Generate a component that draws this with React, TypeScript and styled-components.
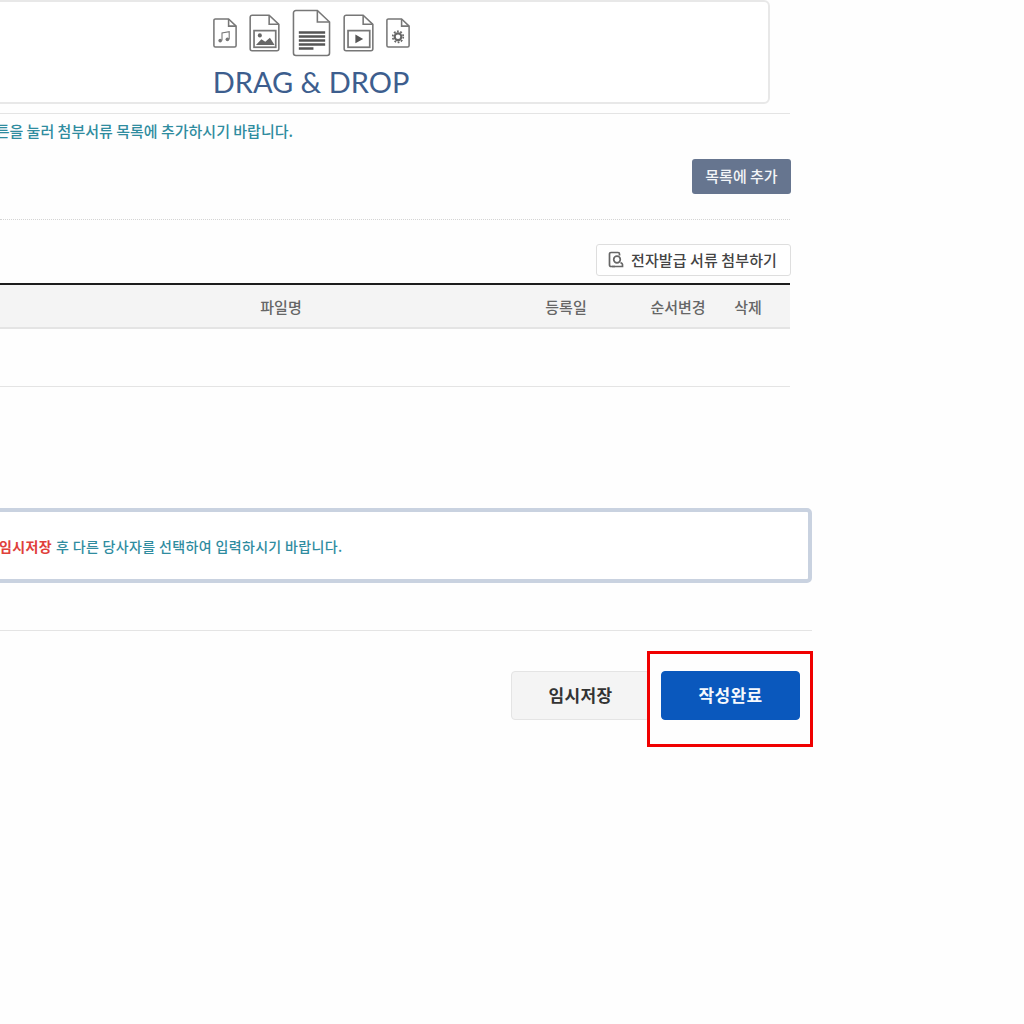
import React from 'react'
import styled, { createGlobalStyle } from 'styled-components'

const GlobalStyle = createGlobalStyle`
  html, body {
    margin: 0;
    padding: 0;
    background: #fefefe;
    overflow: hidden;
  }
  body {
    font-family: "Noto Sans CJK KR", "Noto Sans", sans-serif;
    color: #444;
  }
`;

const Page = styled.div`
  width: 812px;
  height: 1024px;
  display: flex;
  flex-direction: column;
`;

const Upload = styled.div`
  width: 790px;
  display: flex;
  flex-direction: column;
`;

const DropBox = styled.div`
  box-sizing: border-box;
  width: 918px;
  height: 104px;
  margin-left: -148px;
  border: 2px solid #e8e8e8;
  border-radius: 6px;
  background: #fff;
  display: flex;
  flex-direction: column;
  align-items: center;
`;

const IconRow = styled.div`
  height: 48px;
  margin-top: 7px;
  display: flex;
  align-items: center;
  gap: 12px;
`;

const DropLabel = styled.div`
  font-family: Lato, sans-serif;
  font-size: 29px;
  line-height: 36px;
  color: #3d5e8e;
  margin-top: 7px;
`;

const Rule = styled.div`
  height: 1px;
  background: #e4e4e4;
  margin-top: 9px;
`;

const Hint = styled.div`
  width: 293px;
  display: flex;
  justify-content: flex-end;
  margin-top: 8px;
  font-size: 15px;
  line-height: 18px;
  font-weight: 500;
  color: #2f8c9f;
  white-space: nowrap;
`;

const AddRow = styled.div`
  display: flex;
  justify-content: flex-end;
  margin: 19px -1px 0 0;
`;

const AddButton = styled.button`
  width: 99px;
  height: 35px;
  border: 0;
  border-radius: 3px;
  background: #66758f;
  color: #f3f5f8;
  font-family: inherit;
  font-size: 15px;
  font-weight: 500;
  padding: 0 0 2px;
  white-space: nowrap;
`;

const DottedRule = styled.div`
  margin-top: 25px;
  border-top: 1px dotted #d4d4d4;
`;

const IssueRow = styled.div`
  display: flex;
  justify-content: flex-end;
  margin: 24px -1px 0 0;
`;

const IssueButton = styled.button`
  box-sizing: border-box;
  width: 195px;
  height: 32px;
  border: 1px solid #dedede;
  border-radius: 3px;
  background: #fff;
  color: #444;
  font-family: inherit;
  font-size: 15px;
  font-weight: 500;
  letter-spacing: 0.1px;
  display: flex;
  align-items: center;
  gap: 7px;
  padding: 0 0 1px 11px;
  white-space: nowrap;
`;

const Table = styled.div`
  margin-top: 7px;
  border-top: 2px solid #1c1c1c;
`;

const HeadRow = styled.div`
  display: grid;
  grid-template-columns: 80px 402px 168px 56px 84px;
  height: 44px;
  box-sizing: border-box;
  align-items: center;
  background: #f4f4f4;
  border-bottom: 2px solid #e4e4e4;
`;

const HeadCell = styled.div`
  text-align: center;
  font-size: 15px;
  font-weight: 500;
  color: #666;
  white-space: nowrap;
`;

const EmptyRow = styled.div`
  height: 57px;
  border-bottom: 1px solid #e4e4e4;
`;

const Notice = styled.div`
  box-sizing: border-box;
  width: 830px;
  height: 75px;
  margin-left: -18px;
  margin-top: 121px;
  border: 4px solid #c9d2e0;
  border-radius: 5px;
  background: #fff;
  display: flex;
  align-items: center;
  font-size: 14px;
  font-weight: 500;
  letter-spacing: 0.35px;
  color: #2f8c9f;
  white-space: nowrap;
  padding: 0 0 0 13px;
`;

const Strong = styled.span`
  color: #e0403a;
  font-weight: 700;
  margin-right: 4px;
`;

const FooterRule = styled.div`
  height: 1px;
  background: #e4e4e4;
  margin-top: 47px;
`;

const Actions = styled.div`
  position: relative;
  display: flex;
  justify-content: flex-end;
  gap: 11px;
  padding: 40px 12px 0 0;
`;

const ActionButton = styled.button<{ $primary?: boolean }>`
  box-sizing: border-box;
  width: 139px;
  height: 49px;
  border: 1px solid ${p => (p.$primary ? '#0a58bd' : '#e4e4e4')};
  border-radius: 4px;
  background: ${p => (p.$primary ? '#0a58bd' : '#f4f4f4')};
  color: ${p => (p.$primary ? '#f6f9fd' : '#333')};
  font-family: inherit;
  font-size: 17px;
  font-weight: 700;
  letter-spacing: 0.3px;
  padding: 0 0 3px;
`;

const Highlight = styled.div`
  position: absolute;
  top: 20px;
  right: -1px;
  box-sizing: border-box;
  width: 166px;
  height: 96px;
  border: 3px solid #f00000;
  pointer-events: none;
`;

function FileIcon({ w, h, children }: { w: number; h: number; children: React.ReactNode }) {
  return (
    <svg width={w} height={h} viewBox="0 0 40 48" fill="none" stroke="#777" strokeWidth={48 / h * 1.6} preserveAspectRatio="none">
      <path d="M4 1.500H26L38.500 13V44a2.500 2.500 0 0 1-2.500 2.500H4A2.500 2.500 0 0 1 1.500 44V4A2.500 2.500 0 0 1 4 1.500Z" />
      <path d="M26 1.500V13H38.500" />
      {children}
    </svg>
  )
}

export default function App() {
  return (
    <Page>
      <GlobalStyle />
      <Upload>
        <DropBox>
          <IconRow>
            <FileIcon w={24} h={30}>
              <path d="M15 36V24L27 22V34" strokeWidth={1.800} />
              <circle cx="12" cy="36" r="3" fill="#777" stroke="none" />
              <circle cx="24" cy="34" r="3" fill="#777" stroke="none" />
            </FileIcon>
            <FileIcon w={31} h={38}>
              <rect x="6.500" y="21" width="28" height="21" strokeWidth={2.200} />
              <circle cx="14" cy="27" r="2.600" fill="#666" stroke="none" />
              <path d="M9 39L16 32L21 35L27 30L33 39Z" fill="#666" stroke="none" />
            </FileIcon>
            <FileIcon w={39} h={48}>
              <path d="M7 23.500H34M7 27.500H34M7 31.500H34M7 35.500H34M7 39.500H22" stroke="#555" strokeWidth={2.400} />
            </FileIcon>
            <FileIcon w={31} h={38}>
              <rect x="6.500" y="21" width="28" height="21" strokeWidth={2.200} />
              <path d="M16 26L26 31.500L16 37Z" fill="#555" stroke="none" />
            </FileIcon>
            <FileIcon w={24} h={30}>
              <circle cx="20" cy="30" r="5.500" stroke="#666" strokeWidth={3.500} />
              <circle cx="20" cy="30" r="8.800" stroke="#666" strokeWidth={2.800} strokeDasharray="3 2.530" />
            </FileIcon>
          </IconRow>
          <DropLabel>DRAG &amp; DROP</DropLabel>
        </DropBox>
        <Rule />
        <Hint><span>버튼을 눌러 첨부서류 목록에 추가하시기 바랍니다.</span></Hint>
        <AddRow><AddButton>목록에 추가</AddButton></AddRow>
        <DottedRule />
        <IssueRow>
          <IssueButton>
            <svg width="16" height="17" viewBox="0 0 16 17" fill="none" stroke="#666" strokeWidth="1.700">
              <path d="M7 15.500H3a1.500 1.500 0 0 1-1.500-1.500V3A1.500 1.500 0 0 1 3 1.500H10A1.500 1.500 0 0 1 11.500 3V4.500" />
              <circle cx="9" cy="8.500" r="3.300" />
              <path d="M4 15.500H14.500V13.500C14.500 12.500 13.500 12 12.500 11.500" />
            </svg>
            전자발급 서류 첨부하기
          </IssueButton>
        </IssueRow>
        <Table>
          <HeadRow>
            <span />
            <HeadCell>파일명</HeadCell>
            <HeadCell>등록일</HeadCell>
            <HeadCell>순서변경</HeadCell>
            <HeadCell>삭제</HeadCell>
          </HeadRow>
          <EmptyRow />
        </Table>
      </Upload>
      <Notice>
        <Strong>임시저장</Strong> 후 다른 당사자를 선택하여 입력하시기 바랍니다.
      </Notice>
      <FooterRule />
      <Actions>
        <ActionButton>임시저장</ActionButton>
        <ActionButton $primary>작성완료</ActionButton>
        <Highlight />
      </Actions>
    </Page>
  )
}
